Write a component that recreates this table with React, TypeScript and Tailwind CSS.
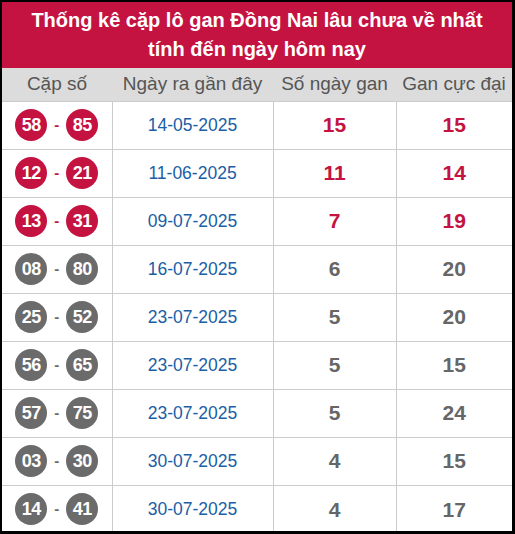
const rows = [
  { a: '58', b: '85', date: '14-05-2025', gan: 15, max: 15, hot: true },
  { a: '12', b: '21', date: '11-06-2025', gan: 11, max: 14, hot: true },
  { a: '13', b: '31', date: '09-07-2025', gan: 7, max: 19, hot: true },
  { a: '08', b: '80', date: '16-07-2025', gan: 6, max: 20, hot: false },
  { a: '25', b: '52', date: '23-07-2025', gan: 5, max: 20, hot: false },
  { a: '56', b: '65', date: '23-07-2025', gan: 5, max: 15, hot: false },
  { a: '57', b: '75', date: '23-07-2025', gan: 5, max: 24, hot: false },
  { a: '03', b: '30', date: '30-07-2025', gan: 4, max: 15, hot: false },
  { a: '14', b: '41', date: '30-07-2025', gan: 4, max: 17, hot: false },
];

function Ball({ n, hot }: { n: string; hot: boolean }) {
  return (
    <span
      className={`inline-flex w-[32px] h-[32px] rounded-full items-center justify-center text-white font-bold text-[18px] tracking-[-0.5px] ${
        hot ? 'bg-[#c41241]' : 'bg-[#6b6b6b]'
      }`}
    >
      {n}
    </span>
  );
}

export default function App() {
  return (
    <div className="w-[515px] h-[534px] bg-black pt-[2px] pl-[2px] pr-[3px] pb-[3px] font-['Liberation_Sans',Arial,sans-serif]">
      <div className="bg-white h-full overflow-hidden">
        <div className="bg-[#c41241] h-[66px] flex flex-col items-center justify-center text-white font-bold text-[20px] leading-[29px]">
          <div>Thống kê cặp lô gan Đồng Nai lâu chưa về nhất</div>
          <div>tính đến ngày hôm nay</div>
        </div>
        <table className="w-full border-collapse table-fixed">
          <colgroup>
            <col className="w-[110px]" />
            <col className="w-[161px]" />
            <col className="w-[123px]" />
            <col />
          </colgroup>
          <thead>
            <tr className="bg-[#dcdcdc] h-[33px] text-[#555] text-[19px]">
              <th className="font-normal">Cặp số</th>
              <th className="font-normal">Ngày ra gần đây</th>
              <th className="font-normal">Số ngày gan</th>
              <th className="font-normal">Gan cực đại</th>
            </tr>
          </thead>
          <tbody>
            {rows.map((r) => (
              <tr key={r.a} className="h-[48px] border-t border-[#cccccc]">
                <td className="border-r border-[#cccccc]">
                  <div className="flex items-center justify-center gap-[7px]">
                    <Ball n={r.a} hot={r.hot} />
                    <span className={`text-[15px] font-bold ${r.hot ? 'text-[#c41241]' : 'text-[#6b6b6b]'}`}>-</span>
                    <Ball n={r.b} hot={r.hot} />
                  </div>
                </td>
                <td className="border-r border-[#cccccc] text-center text-[#1a5ea6] text-[17.5px]">{r.date}</td>
                <td
                  className={`border-r border-[#cccccc] text-center font-bold text-[21px] ${
                    r.hot ? 'text-[#c41241]' : 'text-[#666]'
                  }`}
                >
                  {r.gan}
                </td>
                <td className={`text-center font-bold text-[21px] ${r.hot ? 'text-[#c41241]' : 'text-[#666]'}`}>{r.max}</td>
              </tr>
            ))}
          </tbody>
        </table>
      </div>
    </div>
  );
}
